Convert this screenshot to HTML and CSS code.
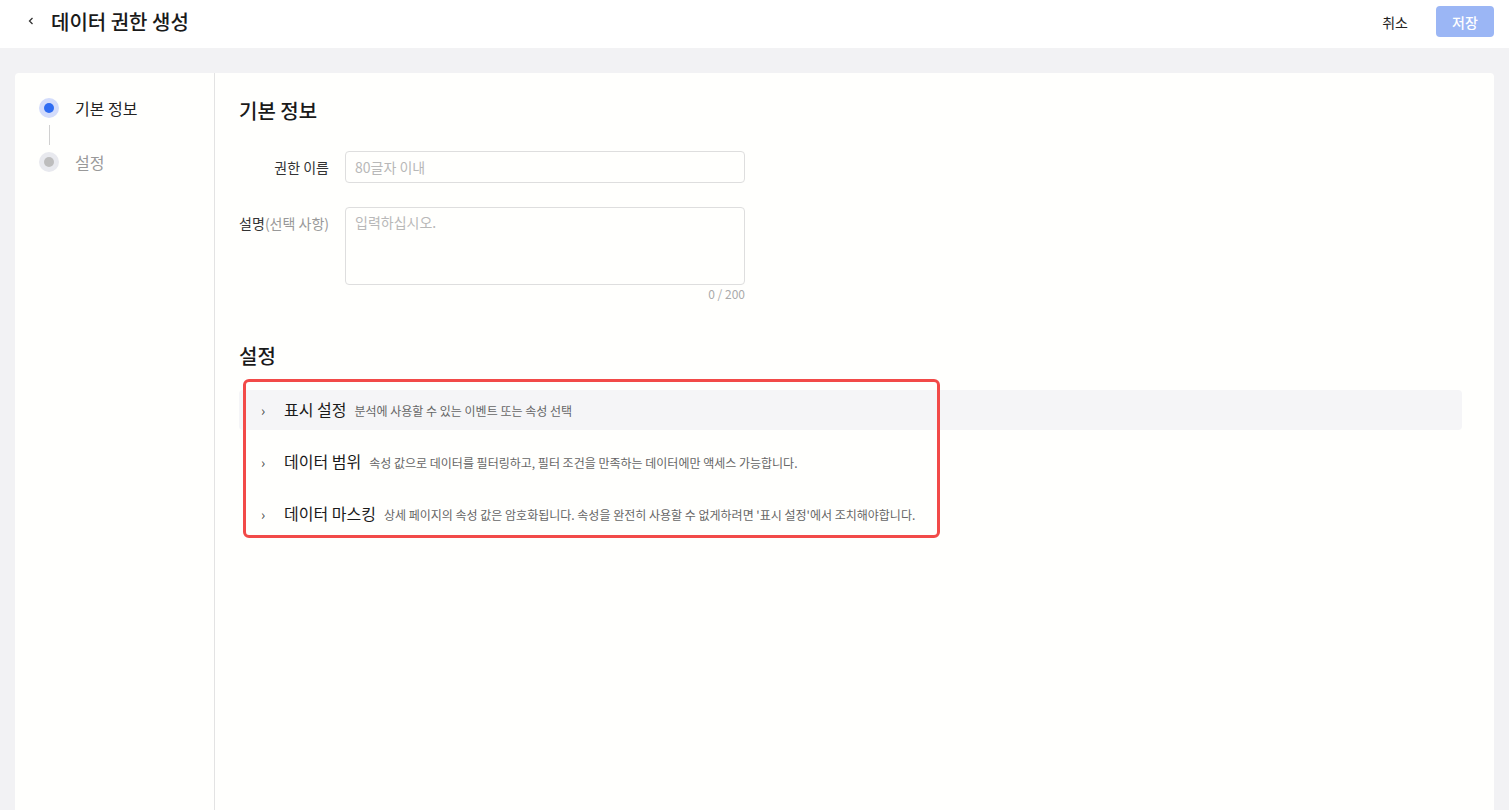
FILE: index.html
```html
<!DOCTYPE html>
<html>
<head>
    <title>데이터 권한 생성</title>
    <link rel="stylesheet" href="styles.css">
</head>
<body>
    <header class="topbar">
        <div class="topbar-left">
            <span class="back">
                <svg width="10" height="10" viewBox="0 0 10 10"><path d="M6.5 2 L3.5 5 L6.5 8" fill="none" stroke="#333" stroke-width="1.3"/></svg>
            </span>
            <h1>데이터 권한 생성</h1>
        </div>
        <div class="topbar-right">
            <button class="btn-text">취소</button>
            <button class="btn-primary">저장</button>
        </div>
    </header>

    <main class="page">
        <div class="card">
            <aside class="steps">
                <div class="step active">
                    <span class="dot"></span>
                    <span class="step-label">기본 정보</span>
                </div>
                <div class="step-line"></div>
                <div class="step">
                    <span class="dot"></span>
                    <span class="step-label">설정</span>
                </div>
            </aside>

            <section class="content">
                <h2>기본 정보</h2>

                <div class="form-row">
                    <label class="form-label">권한 이름</label>
                    <input class="input" type="text" placeholder="80글자 이내">
                </div>

                <div class="form-row textarea-row">
                    <label class="form-label">설명<span class="optional">(선택 사항)</span></label>
                    <div class="field">
                        <textarea class="input textarea" placeholder="입력하십시오."></textarea>
                        <div class="counter">0 / 200</div>
                    </div>
                </div>

                <h2 class="section-title">설정</h2>

                <div class="settings">
                    <div class="setting-row hover">
                        <span class="chevron">›</span>
                        <span class="setting-title">표시 설정</span>
                        <span class="setting-desc">분석에 사용할 수 있는 이벤트 또는 속성 선택</span>
                    </div>
                    <div class="setting-row">
                        <span class="chevron">›</span>
                        <span class="setting-title">데이터 범위</span>
                        <span class="setting-desc">속성 값으로 데이터를 필터링하고, 필터 조건을 만족하는 데이터에만 액세스 가능합니다.</span>
                    </div>
                    <div class="setting-row">
                        <span class="chevron">›</span>
                        <span class="setting-title">데이터 마스킹</span>
                        <span class="setting-desc">상세 페이지의 속성 값은 암호화됩니다. 속성을 완전히 사용할 수 없게하려면 '표시 설정'에서 조치해야합니다.</span>
                    </div>
                    <div class="highlight"></div>
                </div>
            </section>
        </div>
    </main>
</body>
</html>
```

FILE: styles.css
```css
* {
    box-sizing: border-box;
}

body {
    margin: 0;
    font-family: "Noto Sans CJK KR", "Noto Sans", sans-serif;
    background-color: #f2f2f4;
    color: #1f1f1f;
    height: 810px;
    overflow: hidden;
}

.topbar {
    height: 48px;
    background-color: #fff;
    display: flex;
    align-items: center;
    justify-content: space-between;
    padding: 0 15px 0 26px;
}

.topbar-left {
    display: flex;
    align-items: center;
    margin-top: -6px;
}

.back {
    display: flex;
    width: 10px;
    margin-right: 15px;
}

.topbar h1 {
    margin: 0;
    font-size: 20px;
    font-weight: 500;
    color: #1a1a1a;
}

.topbar-right {
    display: flex;
    align-items: center;
    gap: 28px;
    margin-top: -5px;
}

.btn-text {
    background: none;
    border: none;
    font-family: inherit;
    font-size: 14px;
    color: #222;
    padding: 0;
}

.btn-primary {
    width: 58px;
    height: 31px;
    border: none;
    border-radius: 4px;
    background-color: #9bb6f5;
    color: #fff;
    font-family: inherit;
    font-size: 14px;
    font-weight: 500;
}

.page {
    padding: 25px 15px 0 15px;
}

.card {
    display: flex;
    height: 737px;
    background-color: #fffffd;
    border-radius: 4px 4px 0 0;
}

.steps {
    width: 200px;
    border-right: 1px solid #e3e3e3;
    padding: 25px 0 0 24px;
}

.step {
    display: flex;
    align-items: center;
    gap: 16px;
    height: 20px;
}

.dot {
    width: 20px;
    height: 20px;
    border-radius: 50%;
    background-color: #e8e9ee;
    display: flex;
    align-items: center;
    justify-content: center;
}

.dot::after {
    content: "";
    width: 10px;
    height: 10px;
    border-radius: 50%;
    background-color: #bdbdbd;
}

.step.active .dot {
    background-color: #d3dcfb;
}

.step.active .dot::after {
    background-color: #2f6cf2;
}

.step-label {
    font-size: 16px;
    color: #999;
}

.step.active .step-label {
    color: #222;
}

.step-line {
    width: 1px;
    height: 20px;
    background-color: #d0d0d0;
    margin: 7px 0 7px 10px;
}

.content {
    flex: 1;
    padding: 24px 32px 24px 24px;
}

.content h2 {
    margin: 0;
    font-size: 20px;
    font-weight: 500;
    line-height: 28px;
    color: #1a1a1a;
}

.form-row {
    display: flex;
    align-items: center;
    gap: 16px;
    margin-top: 26px;
}

.textarea-row {
    align-items: flex-start;
    margin-top: 24px;
}

.form-label {
    width: 90px;
    text-align: right;
    font-size: 14px;
    color: #333;
}

.textarea-row .form-label {
    padding-top: 6px;
}

.optional {
    color: #999;
}

.input {
    width: 400px;
    height: 32px;
    border: 1px solid #dedede;
    border-radius: 4px;
    padding: 0 9px;
    font-family: inherit;
    font-size: 14px;
    background-color: #fffffd;
}

.input::placeholder {
    color: #b8b8b8;
}

.textarea {
    display: block;
    height: 78px;
    padding: 4px 9px;
    resize: none;
}

.counter {
    text-align: right;
    font-size: 12px;
    color: #aaa;
    margin-top: 0;
}

.section-title {
    margin-top: 40px !important;
}

.settings {
    position: relative;
    margin-top: 20px;
    display: flex;
    flex-direction: column;
    gap: 12px;
}

.setting-row {
    display: flex;
    align-items: baseline;
    height: 40px;
    padding: 7px 0 0 22px;
    border-radius: 4px;
}

.setting-row.hover {
    background-color: #f5f5f7;
}

.chevron {
    font-size: 14px;
    color: #444;
    width: 23px;
}

.setting-title {
    font-size: 16px;
    color: #1a1a1a;
    margin-right: 8px;
}

.setting-desc {
    font-size: 12px;
    color: #666;
}

/* annotation box over the settings list */
.highlight {
    position: absolute;
    left: 4px;
    top: -11px;
    width: 697px;
    height: 159px;
    border: 3px solid #f24a48;
    border-radius: 6px;
    pointer-events: none;
}
```
